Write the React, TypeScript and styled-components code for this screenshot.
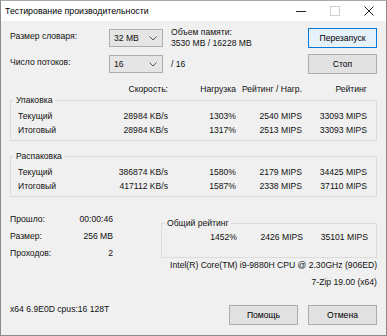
import React from 'react';
import styled, { createGlobalStyle } from 'styled-components';

const GlobalStyle = createGlobalStyle`
	html,
	body {
		margin: 0;
		padding: 0;
		background: #f0f0f0;
	}
	body {
		font-family: 'Liberation Sans', Arial, sans-serif;
		font-size: 8.6px;
		color: #111;
	}
`;

const Window = styled.div`
	box-sizing: border-box;
	width: 387px;
	height: 336px;
	border: 1px solid #8a8a8a;
	border-top-color: #a9a9a9;
	background: #f0f0f0;
	display: flex;
	flex-direction: column;
	overflow: hidden;
`;

const TitleBar = styled.div`
	height: 20px;
	flex-shrink: 0;
	background: #fff;
	display: flex;
	align-items: center;
`;

const Title = styled.div`
	flex: 1;
	padding-left: 4px;
	font-size: 8.8px;
	color: #000;
`;

const CaptionButton = styled.div`
	width: 34px;
	height: 20px;
	display: flex;
	align-items: center;
	justify-content: center;
`;

const Body = styled.div`
	flex: 1;
	display: flex;
	flex-direction: column;
	padding: 0 9px 8px 9px;
`;

const TopGrid = styled.div`
	display: grid;
	grid-template-columns: 99px 54px 1fr 69px;
	grid-template-rows: 20px 20px;
	row-gap: 6px;
	padding-top: 7px;
`;

const FieldLabel = styled.div`
	align-self: center;
	margin-top: -5px;
`;

const Combo = styled.div`
	box-sizing: border-box;
	align-self: center;
	height: 18px;
	border: 1px solid #adadad;
	background: #e5e5e5;
	display: flex;
	align-items: center;
	justify-content: space-between;
	padding: 0 5px 0 4px;
`;

const Info = styled.div`
	align-self: center;
	padding-left: 8px;
	line-height: 11px;
`;

const Button = styled.div<{ $default?: boolean }>`
	box-sizing: border-box;
	width: 69px;
	height: 20px;
	align-self: center;
	display: flex;
	align-items: center;
	justify-content: center;
	background: ${(p) => (p.$default ? '#e5f1fb' : '#e1e1e1')};
	border: 1px solid ${(p) => (p.$default ? '#0078d7' : '#adadad')};
	color: #000;
`;

const TableRow = styled.div<{ $pad?: boolean }>`
	display: grid;
	grid-template-columns: 82px 68px 68px 66px 65px;
	height: 14px;
	line-height: 14px;
	padding: ${(p) => (p.$pad ? '0 9px 0 8px' : '0')};
`;

const HeaderRow = styled(TableRow)`
	margin-top: 9px;
	height: 12px;
	line-height: 12px;
`;

const Cell = styled.div<{ $left?: boolean }>`
	text-align: ${(p) => (p.$left ? 'left' : 'right')};
	white-space: nowrap;
`;

const Group = styled.fieldset<{ $gap?: number }>`
	margin: ${(p) => p.$gap ?? 0}px 0 0 0;
	padding: 3px 8px 3px 7px;
	border: 1px solid #dcdcdc;
	min-width: 0;
`;

const Legend = styled.legend`
	margin-left: -4px;
	padding: 0 2px;
	line-height: 11px;
`;

const BottomGrid = styled.div`
	display: grid;
	grid-template-columns: 151px 1fr;
	margin-top: 13px;
`;

const Stats = styled.div`
	display: grid;
	grid-template-columns: 1fr auto;
	grid-auto-rows: 17px;
	align-items: center;
	width: 103px;
`;

const StatValue = styled.span`
	justify-self: end;
`;

const RatingGroup = styled.fieldset`
	margin: 8px 0 0 0;
	padding: 0 8px 12px 5px;
	border: 1px solid #dcdcdc;
	min-width: 0;
	align-self: start;
`;

const RatingLegend = styled.legend`
	margin-left: -2px;
	padding: 0 2px;
	line-height: 11px;
`;

const RatingRow = styled.div`
	display: grid;
	grid-template-columns: 1fr 66px 65px;
	height: 16px;
	line-height: 16px;
`;

const CpuInfo = styled.div`
	margin-top: -4px;
`;

const InfoLine = styled.div`
	text-align: right;
	line-height: 17px;
	white-space: nowrap;
`;

const Footer = styled.div`
	margin-top: auto;
	display: flex;
	align-items: flex-end;
	gap: 10px;
`;

const Version = styled.div`
	flex: 1;
	line-height: 12px;
	margin-bottom: 12px;
`;

const Chevron = () => (
	<svg width='8' height='5' viewBox='0 0 8 5'>
		<path d='M0.5 0.5 L4 4 L7.5 0.5' fill='none' stroke='#555' strokeWidth='1' />
	</svg>
);

type Row = [string, string, string, string, string];

const packRows: Row[] = [
	['Текущий', '28984 KB/s', '1303%', '2540 MIPS', '33093 MIPS'],
	['Итоговый', '28984 KB/s', '1317%', '2513 MIPS', '33093 MIPS'],
];

const unpackRows: Row[] = [
	['Текущий', '386874 KB/s', '1580%', '2179 MIPS', '34425 MIPS'],
	['Итоговый', '417112 KB/s', '1587%', '2338 MIPS', '37110 MIPS'],
];

const stats = [
	['Прошло:', '00:00:46'],
	['Размер:', '256 MB'],
	['Проходов:', '2'],
];

const renderRows = (rows: Row[]) =>
	rows.map((r) => (
		<TableRow key={r[0]}>
			<Cell $left>{r[0]}</Cell>
			<Cell>{r[1]}</Cell>
			<Cell>{r[2]}</Cell>
			<Cell>{r[3]}</Cell>
			<Cell>{r[4]}</Cell>
		</TableRow>
	));

const App: React.FC = () => {
	return (
		<>
			<GlobalStyle />
			<Window>
				<TitleBar>
					<Title>Тестирование производительности</Title>
					<CaptionButton>
						<svg width='10' height='10' viewBox='0 0 10 10'>
							<path d='M0 5.5 H10' stroke='#222' strokeWidth='1' />
						</svg>
					</CaptionButton>
					<CaptionButton>
						<svg width='10' height='10' viewBox='0 0 10 10'>
							<rect x='0.5' y='0.5' width='9' height='9' fill='none' stroke='#d0d0d0' />
						</svg>
					</CaptionButton>
					<CaptionButton>
						<svg width='10' height='10' viewBox='0 0 10 10'>
							<path d='M0.5 0.5 L9.5 9.5 M9.5 0.5 L0.5 9.5' stroke='#222' strokeWidth='1' />
						</svg>
					</CaptionButton>
				</TitleBar>
				<Body>
					<TopGrid>
						<FieldLabel>Размер словаря:</FieldLabel>
						<Combo>
							<span>32 MB</span>
							<Chevron />
						</Combo>
						<Info>
							Объем памяти:
							<br />
							3530 MB / 16228 MB
						</Info>
						<Button $default>Перезапуск</Button>
						<FieldLabel>Число потоков:</FieldLabel>
						<Combo>
							<span>16</span>
							<Chevron />
						</Combo>
						<Info>/ 16</Info>
						<Button>Стоп</Button>
					</TopGrid>

					<HeaderRow $pad>
						<Cell $left />
						<Cell>Скорость:</Cell>
						<Cell>Нагрузка</Cell>
						<Cell>Рейтинг / Нагр.</Cell>
						<Cell>Рейтинг</Cell>
					</HeaderRow>

					<Group>
						<Legend>Упаковка</Legend>
						{renderRows(packRows)}
					</Group>
					<Group $gap={10}>
						<Legend>Распаковка</Legend>
						{renderRows(unpackRows)}
					</Group>

					<BottomGrid>
						<Stats>
							{stats.map(([label, value]) => (
								<React.Fragment key={label}>
									<span>{label}</span>
									<StatValue>{value}</StatValue>
								</React.Fragment>
							))}
						</Stats>
						<RatingGroup>
							<RatingLegend>Общий рейтинг</RatingLegend>
							<RatingRow>
								<Cell>1452%</Cell>
								<Cell>2426 MIPS</Cell>
								<Cell>35101 MIPS</Cell>
							</RatingRow>
						</RatingGroup>
					</BottomGrid>

					<CpuInfo>
						<InfoLine>Intel(R) Core(TM) i9-9880H CPU @ 2.30GHz (906ED)</InfoLine>
						<InfoLine>7-Zip 19.00 (x64)</InfoLine>
					</CpuInfo>

					<Footer>
						<Version>x64 6.9E0D cpus:16 128T</Version>
						<Button>Помощь</Button>
						<Button>Отмена</Button>
					</Footer>
				</Body>
			</Window>
		</>
	);
};

export default App;
